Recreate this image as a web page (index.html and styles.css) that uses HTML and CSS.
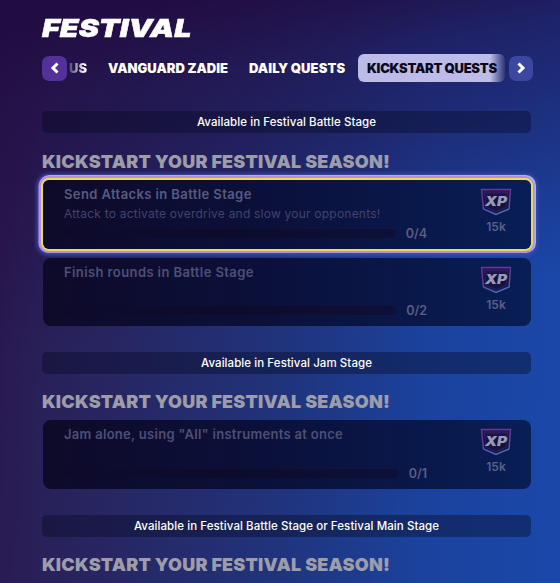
FILE: index.html
```
<!DOCTYPE html>
<html lang="en">
<head>
  <meta charset="UTF-8">
  <title>Festival Quests</title>
  <meta name="viewport" content="width=device-width, initial-scale=1.0">
  <link rel="stylesheet" href="styles.css">
</head>
<body>
  <!-- shared XP badge -->
  <svg class="defs" width="0" height="0">
    <defs>
      <linearGradient id="xp-edge" x1="0" y1="0" x2="0.4" y2="1">
        <stop offset="0" stop-color="#633795"/>
        <stop offset="0.5" stop-color="#6a35a5"/>
        <stop offset="1" stop-color="#4f68b4"/>
      </linearGradient>
      <linearGradient id="xp-fill" x1="0" y1="0" x2="0" y2="1">
        <stop offset="0" stop-color="#2b1a59"/>
        <stop offset="0.4" stop-color="#11103a"/>
        <stop offset="1" stop-color="#101b4b"/>
      </linearGradient>
      <symbol id="xp" viewBox="0 0 32 28">
        <path d="M1.5 1.5 H30.5 L29 21 L16 26.5 L3.5 21 Z" fill="url(#xp-fill)" stroke="url(#xp-edge)" stroke-width="1.4"/>
        <path d="M4.5 4.2 H27.5 L26.3 19.3 L16 23.8 L6 19.3 Z" fill="none" stroke="#3c246d" stroke-width="0.7"/>
        <text class="xp-text" x="16" y="17.6" text-anchor="middle" textLength="22" lengthAdjust="spacingAndGlyphs">XP</text>
      </symbol>
    </defs>
  </svg>

  <header>
    <h1>FESTIVAL</h1>
    <nav class="tabs">
      <button class="arrow prev" aria-label="Previous">
        <svg width="10" height="14" viewBox="0 0 10 14"><path d="M7.5 2.5 L3 7 L7.5 11.5"/></svg>
      </button>
      <span class="tab cut">US</span>
      <span class="tab zadie">VANGUARD ZADIE</span>
      <span class="tab daily">DAILY QUESTS</span>
      <span class="tab active">KICKSTART QUESTS</span>
      <button class="arrow next" aria-label="Next">
        <svg width="10" height="14" viewBox="0 0 10 14"><path d="M2.5 2.5 L7 7 L2.5 11.5"/></svg>
      </button>
    </nav>
  </header>

  <main>
    <section>
      <div class="available">Available in Festival Battle Stage</div>
      <h2 class="first">KICKSTART YOUR FESTIVAL SEASON!</h2>
      <div class="quest selected">
        <div class="info">
          <h3>Send Attacks in Battle Stage</h3>
          <p>Attack to activate overdrive and slow your opponents!</p>
          <div class="progress"><div class="track"></div><span>0/4</span></div>
        </div>
        <div class="reward"><svg width="32" height="28"><use href="#xp"/></svg><span>15k</span></div>
      </div>
      <div class="quest">
        <div class="info">
          <h3>Finish rounds in Battle Stage</h3>
          <div class="progress"><div class="track"></div><span>0/2</span></div>
        </div>
        <div class="reward"><svg width="32" height="28"><use href="#xp"/></svg><span>15k</span></div>
      </div>
    </section>

    <section>
      <div class="available">Available in Festival Jam Stage</div>
      <h2>KICKSTART YOUR FESTIVAL SEASON!</h2>
      <div class="quest">
        <div class="info">
          <h3 class="long">Jam alone, using "All" instruments at once</h3>
          <div class="progress"><div class="track"></div><span>0/1</span></div>
        </div>
        <div class="reward"><svg width="32" height="28"><use href="#xp"/></svg><span>15k</span></div>
      </div>
    </section>

    <section>
      <div class="available">Available in Festival Battle Stage or Festival Main Stage</div>
      <h2>KICKSTART YOUR FESTIVAL SEASON!</h2>
    </section>
  </main>
</body>
</html>
```

FILE: styles.css
```
* {
  box-sizing: border-box;
}

body {
  margin: 0;
  height: 583px;
  overflow: hidden;
  padding: 16px 27px 0 42px;
  font-family: Inter, 'Liberation Sans', sans-serif;
  color: #fff;
  background:
    linear-gradient(171deg, #210d43 4%, rgba(33, 13, 67, 0.62) 16%, rgba(33, 13, 67, 0) 54%),
    linear-gradient(92deg, #29174f 0%, #292058 9%, #262967 28%, #20347d 52%, #1b429d 76%, #1a48aa 100%);
}

h1, h2, h3, p {
  margin: 0;
  white-space: nowrap;
}

.defs {
  display: block;
}

h1 {
  width: fit-content;
  font-size: 25px;
  line-height: 24px;
  font-weight: 900;
  font-style: italic;
  -webkit-text-stroke: 0.5px #fff;
  transform: scaleX(1.215);
  transform-origin: left;
}

/* tabs */
.tabs {
  display: flex;
  align-items: center;
  height: 28px;
  margin-top: 14px;
}

.arrow {
  flex: none;
  display: flex;
  align-items: center;
  justify-content: center;
  width: 25px;
  height: 25px;
  padding: 0;
  border: none;
  border-radius: 7px;
  background: #53309a;
}

.arrow.next {
  width: 24px;
  margin-left: 4px;
  background: #3c479f;
}

.arrow path {
  fill: none;
  stroke: #fff;
  stroke-width: 3;
}

.tab {
  flex: none;
  font-size: 13px;
  line-height: 28px;
  font-weight: 900;
  white-space: nowrap;
}

.cut {
  width: 18px;
  margin: 0 21px 0 2px;
  background: linear-gradient(90deg, #4c4470, #fff 90%);
  -webkit-background-clip: text;
  background-clip: text;
  color: transparent;
}

.zadie {
  width: 141px;
}

.daily {
  width: 109px;
  letter-spacing: 0.1px;
}

.active {
  width: 147px;
  padding-left: 9px;
  border-radius: 6px;
  letter-spacing: -0.25px;
  color: #0b0a20;
  background: linear-gradient(90deg, #bdbbe7 90%, #2c3577 100%);
}

/* quest list */
main {
  display: flex;
  flex-direction: column;
  gap: 26px;
  margin-top: 29px;
  width: 489px;
}

.available {
  height: 22px;
  border-radius: 5px;
  background: rgba(6, 7, 32, 0.38);
  font-size: 11.5px;
  line-height: 23px;
  font-weight: 500;
  letter-spacing: 0.07px;
  text-align: center;
  white-space: nowrap;
}

h2 {
  margin: 17px 0 7px;
  font-size: 18px;
  line-height: 22px;
  font-weight: 900;
  letter-spacing: 0.2px;
  color: #9d9cab;
}

h2.first {
  margin-top: 18px;
}

.quest {
  display: flex;
  height: 69px;
  margin-left: 1px;
  padding: 4px 19px 0 21px;
  border-radius: 8px;
  background: linear-gradient(90deg, #0e0a29, #0b103a 45%, #081e55);
  color: #4f4f76;
}

.quest + .quest {
  height: 68px;
  margin-top: 9px;
}

.quest.selected {
  border-radius: 6px;
  color: #5a5a80;
  box-shadow:
    0 0 0 2px #ecdc55,
    -0.5px 0 0 4px #b28fe6,
    0.5px -0.5px 0 4.5px #a9b0f8,
    0 0 4px 6px #4552b4;
}

.info {
  display: flex;
  flex-direction: column;
  width: 363px;
}

h3 {
  font-size: 13px;
  line-height: 21px;
  font-weight: 600;
  letter-spacing: 0.4px;
}

h3.long {
  letter-spacing: 0.3px;
}

p {
  font-size: 12px;
  line-height: 17px;
  letter-spacing: 0.22px;
  color: #43436a;
}

.progress {
  display: flex;
  align-items: center;
  gap: 10px;
  margin: auto 0 7px;
  height: 17px;
}

.track {
  flex: 1;
  height: 9px;
  border-radius: 5px;
  background: linear-gradient(90deg, rgba(14, 9, 38, 0.3), #0d0b2b 45%, #0e0f36);
}

.progress span {
  font-size: 12.5px;
  font-weight: 600;
  color: #5d5c83;
}

.reward {
  display: flex;
  flex-direction: column;
  align-items: center;
  width: 32px;
  margin: 4px 0 0 auto;
}

.reward span {
  margin-top: 3px;
  font-size: 12px;
  line-height: 15px;
  font-weight: 600;
  color: #5d5f89;
}

.xp-text {
  font-family: Inter, 'Liberation Sans', sans-serif;
  font-size: 12.5px;
  font-weight: 900;
  font-style: italic;
  fill: #9a9ab8;
}
```
